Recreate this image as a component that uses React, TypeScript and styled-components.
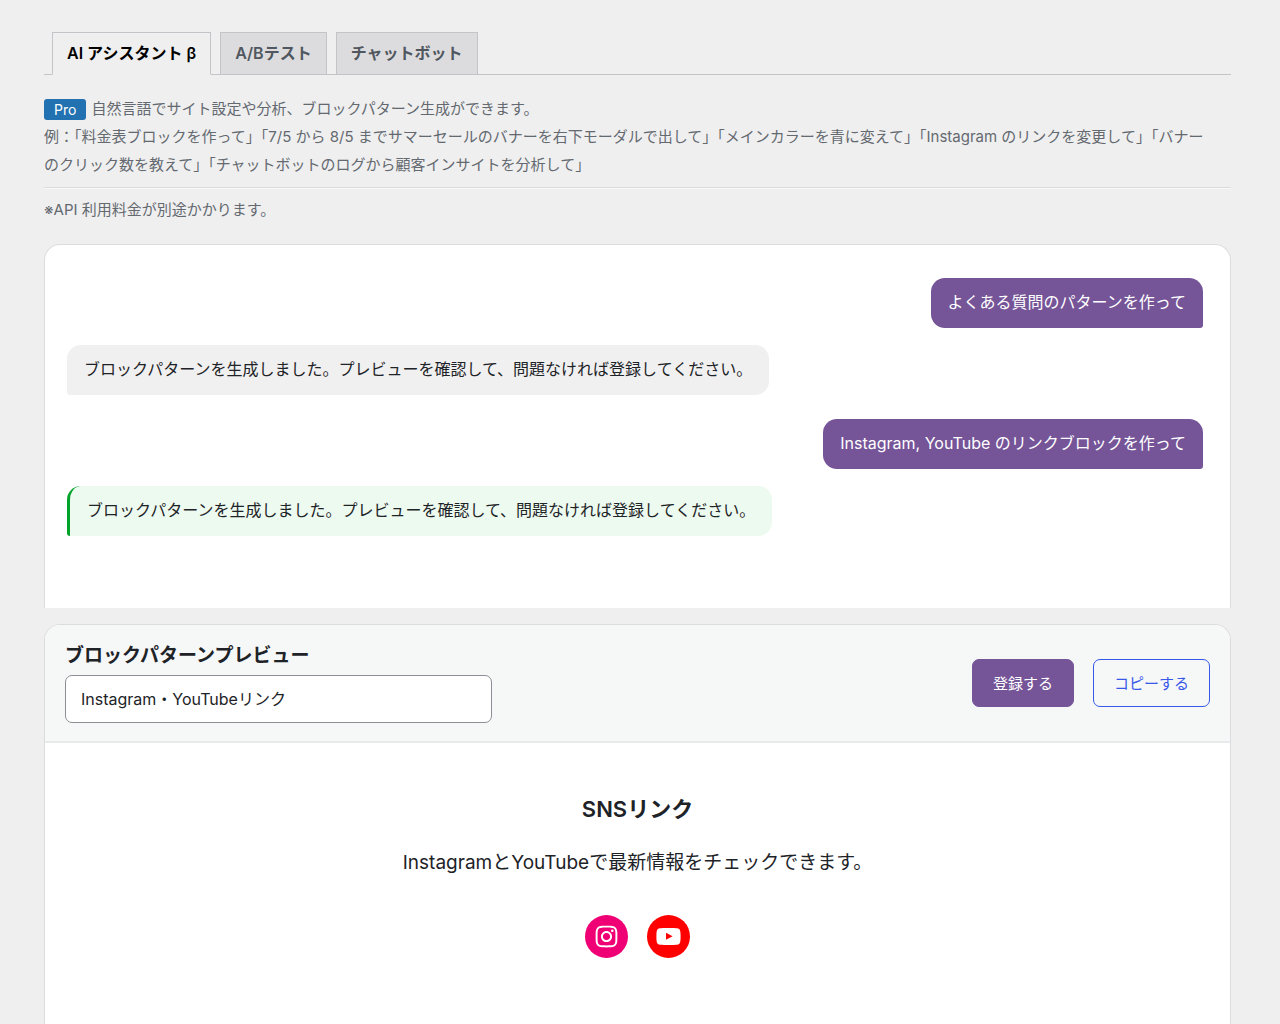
import React, { useState } from "react";
import styled, { createGlobalStyle } from "styled-components";

const GlobalStyle = createGlobalStyle`
  *, *::before, *::after { box-sizing: border-box; }
  body {
    margin: 0;
    background: #efefef;
    color: #1d2327;
    font-family: Inter, "Noto Sans CJK JP", sans-serif;
    font-size: 16px;
  }
`;

const Page = styled.main`
  display: flex;
  flex-direction: column;
  min-height: 100vh;
  padding: 32px 49px 0 44px;
`;

const Tabs = styled.nav`
  display: flex;
  gap: 9px;
  padding: 0 8px;
  border-bottom: 1px solid #c3c4c7;
`;

const Tab = styled.a<{ $active?: boolean }>`
  margin-bottom: -1px;
  padding: 8px 14px;
  border: 1px solid #c3c4c7;
  border-bottom-color: ${(p) => (p.$active ? "#efefef" : "#c3c4c7")};
  background: ${(p) => (p.$active ? "#efefef" : "#dcdcde")};
  color: ${(p) => (p.$active ? "#000" : "#50575e")};
  font-weight: 600;
  line-height: 25px;
  text-decoration: none;
`;

const Description = styled.p`
  margin: 20px 0 0;
  padding-bottom: 8px;
  border-bottom: 1px solid #dcdcde;
  box-shadow: 0 1px 0 #f8f8f8;
  color: #646970;
  font-size: 15px;
  line-height: 28px;
`;

const ProBadge = styled.span`
  display: inline-block;
  margin-right: 5px;
  padding: 0 10px;
  border-radius: 3px;
  background: #2271b1;
  color: #fff;
  font-size: 14px;
  line-height: 21px;
  vertical-align: middle;
`;

const Note = styled.p`
  margin: 8px 0 20px;
  color: #646970;
  font-size: 15px;
  line-height: 28px;
`;

const Chat = styled.section`
  display: flex;
  flex-direction: column;
  gap: 24px;
  min-height: 364px;
  padding: 33px 27px 33px 22px;
  border: 1px solid #dcdcde;
  border-bottom: 0;
  border-radius: 16px 16px 0 0;
  background: #fff;
`;

const Exchange = styled.div`
  display: flex;
  flex-direction: column;
  gap: 17px;
`;

const Bubble = styled.p<{ $kind: "user" | "reply" | "success" }>`
  align-self: ${(p) => (p.$kind === "user" ? "flex-end" : "flex-start")};
  margin: 0;
  padding: 11px 17px 13px;
  border-left: ${(p) => (p.$kind === "success" ? "3px solid #00a32a" : "0")};
  border-radius: ${(p) => (p.$kind === "user" ? "14px 14px 3px 14px" : "14px 14px 14px 3px")};
  background: ${(p) => ({ user: "#755498", reply: "#f0f0f0", success: "#edfaef" })[p.$kind]};
  color: ${(p) => (p.$kind === "user" ? "#fff" : "#1d2327")};
  line-height: 26px;
`;

const Preview = styled.section`
  display: flex;
  flex: 1;
  flex-direction: column;
  margin-top: 16px;
  border: 1px solid #dcdcde;
  border-bottom: 0;
  border-radius: 16px 16px 0 0;
  background: #fff;
  overflow: hidden;
`;

const PreviewHeader = styled.header`
  display: flex;
  align-items: center;
  justify-content: space-between;
  gap: 20px;
  padding: 18px 20px;
  border-bottom: 2px solid #e9eaeb;
  background: #f6f7f7;
`;

const NameField = styled.div`
  display: flex;
  flex: 0 1 427px;
  flex-direction: column;
  gap: 6px;
`;

const NameLabel = styled.label`
  font-size: 19px;
  font-weight: 600;
  line-height: 26px;
`;

const NameInput = styled.input`
  width: 100%;
  height: 48px;
  padding: 0 15px 2px;
  border: 1px solid #8c8f94;
  border-radius: 7px;
  background: #fff;
  color: #1d2327;
  font: inherit;
`;

const Actions = styled.div`
  display: flex;
  gap: 19px;
`;

const ActionButton = styled.button<{ $primary?: boolean }>`
  height: 48px;
  padding: 0 20px 2px;
  border: 1px solid ${(p) => (p.$primary ? "#755498" : "#3858e9")};
  border-radius: 7px;
  background: ${(p) => (p.$primary ? "#755498" : "transparent")};
  color: ${(p) => (p.$primary ? "#fff" : "#3858e9")};
  font: inherit;
  font-size: 15px;
`;

const PreviewBody = styled.div`
  display: flex;
  flex-direction: column;
  align-items: center;
  padding: 50px 20px;
  text-align: center;
`;

const PreviewTitle = styled.h2`
  margin: 0;
  font-size: 22px;
  font-weight: 600;
  line-height: 32px;
`;

const PreviewText = styled.p`
  margin: 22px 0 36px;
  font-size: 19px;
  line-height: 32px;
`;

const SocialLinks = styled.div`
  display: flex;
  gap: 19px;
`;

const SocialLink = styled.a<{ $color: string }>`
  display: grid;
  place-items: center;
  width: 43px;
  height: 43px;
  border-radius: 50%;
  background: ${(p) => p.$color};
`;

const InstagramIcon = () => (
  <svg width="29" height="29" viewBox="0 0 24 24" fill="#fff" aria-hidden="true">
    <path d="M12,4.622c2.403,0,2.688,0.009,3.637,0.052c0.877,0.04,1.354,0.187,1.671,0.31c0.42,0.163,0.72,0.358,1.035,0.673 c0.315,0.315,0.51,0.615,0.673,1.035c0.123,0.317,0.27,0.794,0.31,1.671c0.043,0.949,0.052,1.234,0.052,3.637 s-0.009,2.688-0.052,3.637c-0.04,0.877-0.187,1.354-0.31,1.671c-0.163,0.42-0.358,0.72-0.673,1.035 c-0.315,0.315-0.615,0.51-1.035,0.673c-0.317,0.123-0.794,0.27-1.671,0.31c-0.949,0.043-1.233,0.052-3.637,0.052 s-2.688-0.009-3.637-0.052c-0.877-0.04-1.354-0.187-1.671-0.31c-0.42-0.163-0.72-0.358-1.035-0.673 c-0.315-0.315-0.51-0.615-0.673-1.035c-0.123-0.317-0.27-0.794-0.31-1.671C4.631,14.688,4.622,14.403,4.622,12 s0.009-2.688,0.052-3.637c0.04-0.877,0.187-1.354,0.31-1.671c0.163-0.42,0.358-0.72,0.673-1.035 c0.315-0.315,0.615-0.51,1.035-0.673c0.317-0.123,0.794-0.27,1.671-0.31C9.312,4.631,9.597,4.622,12,4.622 M12,3 C9.556,3,9.249,3.01,8.289,3.054C7.331,3.098,6.677,3.25,6.105,3.472C5.513,3.702,5.011,4.01,4.511,4.511 c-0.5,0.5-0.808,1.002-1.038,1.594C3.25,6.677,3.098,7.331,3.054,8.289C3.01,9.249,3,9.556,3,12c0,2.444,0.01,2.751,0.054,3.711 c0.044,0.958,0.196,1.612,0.418,2.185c0.23,0.592,0.538,1.094,1.038,1.594c0.5,0.5,1.002,0.808,1.594,1.038 c0.572,0.222,1.227,0.375,2.185,0.418C9.249,20.99,9.556,21,12,21s2.751-0.01,3.711-0.054c0.958-0.044,1.612-0.196,2.185-0.418 c0.592-0.23,1.094-0.538,1.594-1.038c0.5-0.5,0.808-1.002,1.038-1.594c0.222-0.572,0.375-1.227,0.418-2.185 C20.99,14.751,21,14.444,21,12s-0.01-2.751-0.054-3.711c-0.044-0.958-0.196-1.612-0.418-2.185c-0.23-0.592-0.538-1.094-1.038-1.594 c-0.5-0.5-1.002-0.808-1.594-1.038c-0.572-0.222-1.227-0.375-2.185-0.418C14.751,3.01,14.444,3,12,3L12,3z M12,7.378 c-2.552,0-4.622,2.069-4.622,4.622S9.448,16.622,12,16.622s4.622-2.069,4.622-4.622S14.552,7.378,12,7.378z M12,15 c-1.657,0-3-1.343-3-3s1.343-3,3-3s3,1.343,3,3S13.657,15,12,15z M16.804,6.116c-0.596,0-1.08,0.484-1.08,1.08 s0.484,1.08,1.08,1.08c0.596,0,1.08-0.484,1.08-1.08S17.401,6.116,16.804,6.116z" />
  </svg>
);

const YouTubeIcon = () => (
  <svg width="29" height="29" viewBox="0 0 24 24" fill="#fff" aria-hidden="true">
    <path d="M21.8,8.001c0,0-0.195-1.378-0.795-1.985c-0.76-0.797-1.613-0.801-2.004-0.847c-2.799-0.202-6.997-0.202-6.997-0.202 h-0.009c0,0-4.198,0-6.997,0.202C4.608,5.216,3.756,5.22,2.995,6.016C2.395,6.623,2.2,8.001,2.2,8.001S2,9.62,2,11.238v1.517 c0,1.618,0.2,3.237,0.2,3.237s0.195,1.378,0.795,1.985c0.761,0.797,1.76,0.771,2.205,0.855c1.6,0.153,6.8,0.201,6.8,0.201 s4.203-0.006,7.001-0.209c0.391-0.047,1.243-0.051,2.004-0.847c0.6-0.607,0.795-1.985,0.795-1.985s0.2-1.618,0.2-3.237v-1.517 C22,9.62,21.8,8.001,21.8,8.001z M9.935,14.594l-0.001-5.62l5.404,2.82L9.935,14.594z" />
  </svg>
);

export default function App() {
  const [name, setName] = useState("Instagram・YouTubeリンク");

  return (
    <>
      <GlobalStyle />
      <Page lang="ja">
        <Tabs>
          <Tab href="#assistant" $active aria-current="page">AI アシスタント β</Tab>
          <Tab href="#abtest">A/Bテスト</Tab>
          <Tab href="#chatbot">チャットボット</Tab>
        </Tabs>

        <Description>
          <ProBadge>Pro</ProBadge>自然言語でサイト設定や分析、ブロックパターン生成ができます。
          <br />
          例：「料金表ブロックを作って」「7/5 から 8/5 までサマーセールのバナーを右下モーダルで出して」「メインカラーを青に変えて」「Instagram のリンクを変更して」「バナー
          <br />
          のクリック数を教えて」「チャットボットのログから顧客インサイトを分析して」
        </Description>
        <Note>※API 利用料金が別途かかります。</Note>

        <Chat>
          <Exchange>
            <Bubble $kind="user">よくある質問のパターンを作って</Bubble>
            <Bubble $kind="reply">ブロックパターンを生成しました。プレビューを確認して、問題なければ登録してください。</Bubble>
          </Exchange>
          <Exchange>
            <Bubble $kind="user">Instagram, YouTube のリンクブロックを作って</Bubble>
            <Bubble $kind="success">ブロックパターンを生成しました。プレビューを確認して、問題なければ登録してください。</Bubble>
          </Exchange>
        </Chat>

        <Preview>
          <PreviewHeader>
            <NameField>
              <NameLabel htmlFor="pattern-name">ブロックパターンプレビュー</NameLabel>
              <NameInput id="pattern-name" type="text" value={name} onChange={(e) => setName(e.target.value)} />
            </NameField>
            <Actions>
              <ActionButton type="button" $primary>登録する</ActionButton>
              <ActionButton type="button">コピーする</ActionButton>
            </Actions>
          </PreviewHeader>
          <PreviewBody>
            <PreviewTitle>SNSリンク</PreviewTitle>
            <PreviewText>InstagramとYouTubeで最新情報をチェックできます。</PreviewText>
            <SocialLinks>
              <SocialLink href="#instagram" aria-label="Instagram" $color="#f00075"><InstagramIcon /></SocialLink>
              <SocialLink href="#youtube" aria-label="YouTube" $color="#ff0000"><YouTubeIcon /></SocialLink>
            </SocialLinks>
          </PreviewBody>
        </Preview>
      </Page>
    </>
  );
}
